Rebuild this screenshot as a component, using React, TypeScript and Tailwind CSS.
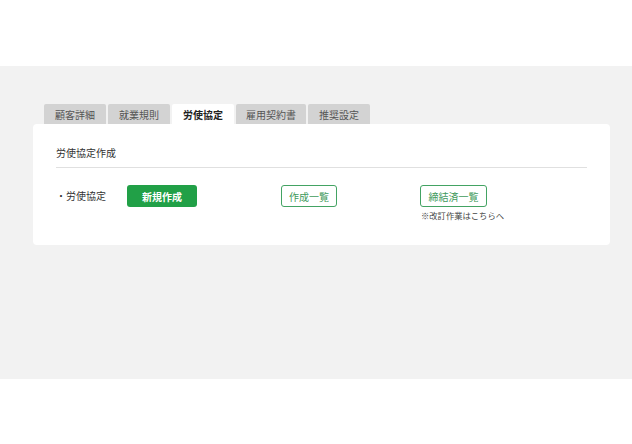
import React from 'react';

const tabs = ['顧客詳細', '就業規則', '労使協定', '雇用契約書', '推奨設定'];

export default function App() {
    return (
        <div className="w-[632px] h-[444px] bg-white" style={{ fontFamily: '"Noto Sans CJK JP", "Noto Sans", sans-serif' }}>
            <div className="h-[66px]" />
            <div className="h-[313px] bg-[#f2f2f2] px-[33px] pt-[38px]">
                <div className="flex gap-[2px] pl-[11px]">
                    {tabs.map((t, i) => (
                        <div
                            key={t}
                            className={`h-[20px] flex items-center justify-center text-[10px] rounded-t-[2px] ${
                                i === 2 ? 'bg-white text-[#222] font-bold' : 'bg-[#d3d3d3] text-[#555]'
                            } ${i === 3 ? 'w-[70px]' : 'w-[62px]'}`}
                        >
                            {t}
                        </div>
                    ))}
                </div>
                <div className="w-[577px] h-[121px] bg-white rounded-[4px] px-[23px] pt-[21px]">
                    <div className="text-[10px] text-[#333] pb-[7px] border-b border-[#e0e0e0]">労使協定作成</div>
                    <div className="flex items-start pt-[17px]">
                        <div className="w-[71px] h-[20px] flex items-center text-[10px] text-[#333]">・労使協定</div>
                        <div className="w-[154px]">
                            <button className="block w-[70px] h-[22px] bg-[#21a047] text-white text-[10px] font-bold rounded-[3px]">新規作成</button>
                        </div>
                        <div className="w-[139px]">
                            <button className="block w-[56px] h-[22px] border border-[#43a363] text-[#3f9a5c] text-[10px] rounded-[3px] bg-white">作成一覧</button>
                        </div>
                        <div className="flex flex-col">
                            <button className="block w-[67px] h-[22px] border border-[#43a363] text-[#3f9a5c] text-[10px] rounded-[3px] bg-white">締結済一覧</button>
                            <div className="text-[8.3px] leading-[12px] text-[#444] mt-[2px] pl-[1px]">※改訂作業はこちらへ</div>
                        </div>
                    </div>
                </div>
            </div>
        </div>
    );
}
